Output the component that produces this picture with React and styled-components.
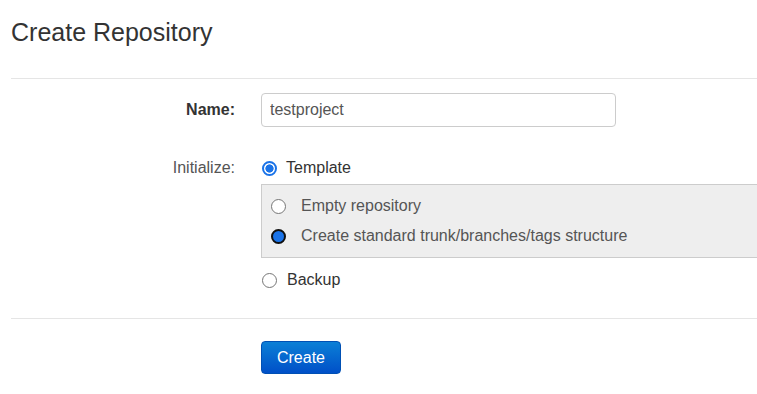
import React from 'react'
import styled, { createGlobalStyle } from 'styled-components'

const GlobalStyle = createGlobalStyle`
  html, body {
    margin: 0;
    padding: 0;
    background: #fff;
  }
  body {
    font-family: "Liberation Sans", Arial, sans-serif;
    color: #333;
  }
`;

const Page = styled.div`
  width: 757px;
  padding-left: 11px;
  box-sizing: border-box;
`;

const Title = styled.h1`
  margin: 0 0 31px;
  padding-top: 17px;
  font-size: 25px;
  line-height: 30px;
  font-weight: normal;
  color: #333;
`;

const Divider = styled.div`
  height: 1px;
  background: #e5e5e5;
`;

const Form = styled.form`
  display: flex;
  flex-direction: column;
  padding-top: 14px;
`;

const Row = styled.div`
  display: flex;
  align-items: ${p => (p.$top ? 'flex-start' : 'center')};
  margin-top: ${p => p.$gap || 0}px;
`;

const Label = styled.label`
  width: 224px;
  flex: none;
  text-align: right;
  font-size: 16px;
  line-height: 24px;
  font-weight: ${p => (p.$bold ? 'bold' : 'normal')};
  color: ${p => (p.$bold ? '#333' : '#555')};
  margin-right: 26px;
`;

const Field = styled.div`
  flex: 1;
  display: flex;
  flex-direction: column;
`;

const TextInput = styled.input`
  width: 355px;
  height: 34px;
  box-sizing: border-box;
  border: 1px solid #ccc;
  border-radius: 4px;
  padding: 0 8px;
  font-family: inherit;
  font-size: 16px;
  color: #555;
  outline: none;
`;

const Option = styled.label`
  display: flex;
  align-items: center;
  height: ${p => p.$h || 24}px;
  font-size: 16px;
  color: ${p => (p.$muted ? '#555' : '#333')};
`;

const Radio = styled.span`
  flex: none;
  box-sizing: border-box;
  width: 15px;
  height: 15px;
  border-radius: 50%;
  margin-right: ${p => p.$space || 9}px;
  margin-left: ${p => p.$inset || 1}px;
  border: ${p =>
    p.$state === 'checked' ? '2px solid #1a73e8'
    : p.$state === 'focus' ? '2px solid #101010'
    : '1px solid #767676'};
  background: ${p =>
    p.$state === 'focus' ? '#1a73e8'
    : p.$state === 'checked' ? 'radial-gradient(circle, #1a73e8 0 3.8px, #fff 4.4px)'
    : '#fff'};
`;

const SubBox = styled.div`
  margin-top: 4px;
  background: #eee;
  border: 1px solid #ccc;
  border-right: none;
  padding: 6px 0 6px 8px;
`;

const Actions = styled.div`
  padding: 22px 0 0 250px;
`;

const Button = styled.button`
  width: 80px;
  height: 33px;
  border: 1px solid #0050b4;
  border-radius: 4px;
  background: linear-gradient(#0b7fd6, #0050c8);
  color: #fff;
  font-family: inherit;
  font-size: 16px;
  padding: 0;
`;

export default function App() {
  return (
    <Page>
      <GlobalStyle />
      <Title>Create Repository</Title>
      <Divider />
      <Form>
        <Row>
          <Label $bold>Name:</Label>
          <TextInput defaultValue="testproject" />
        </Row>
        <Row $top $gap={29}>
          <Label>Initialize:</Label>
          <Field>
            <Option>
              <Radio $state="checked" />
              Template
            </Option>
            <SubBox>
              <Option $h={30} $muted>
                <Radio $inset={0} $space={15} />
                Empty repository
              </Option>
              <Option $h={30} $muted>
                <Radio $inset={0} $space={15} $state="focus" />
                Create standard trunk/branches/tags structure
              </Option>
            </SubBox>
            <Option style={{ marginTop: 10 }}>
              <Radio $inset={0} $space={10} />
              Backup
            </Option>
          </Field>
        </Row>
      </Form>
      <Divider style={{ marginTop: 26 }} />
      <Actions>
        <Button type="button">Create</Button>
      </Actions>
    </Page>
  )
}
